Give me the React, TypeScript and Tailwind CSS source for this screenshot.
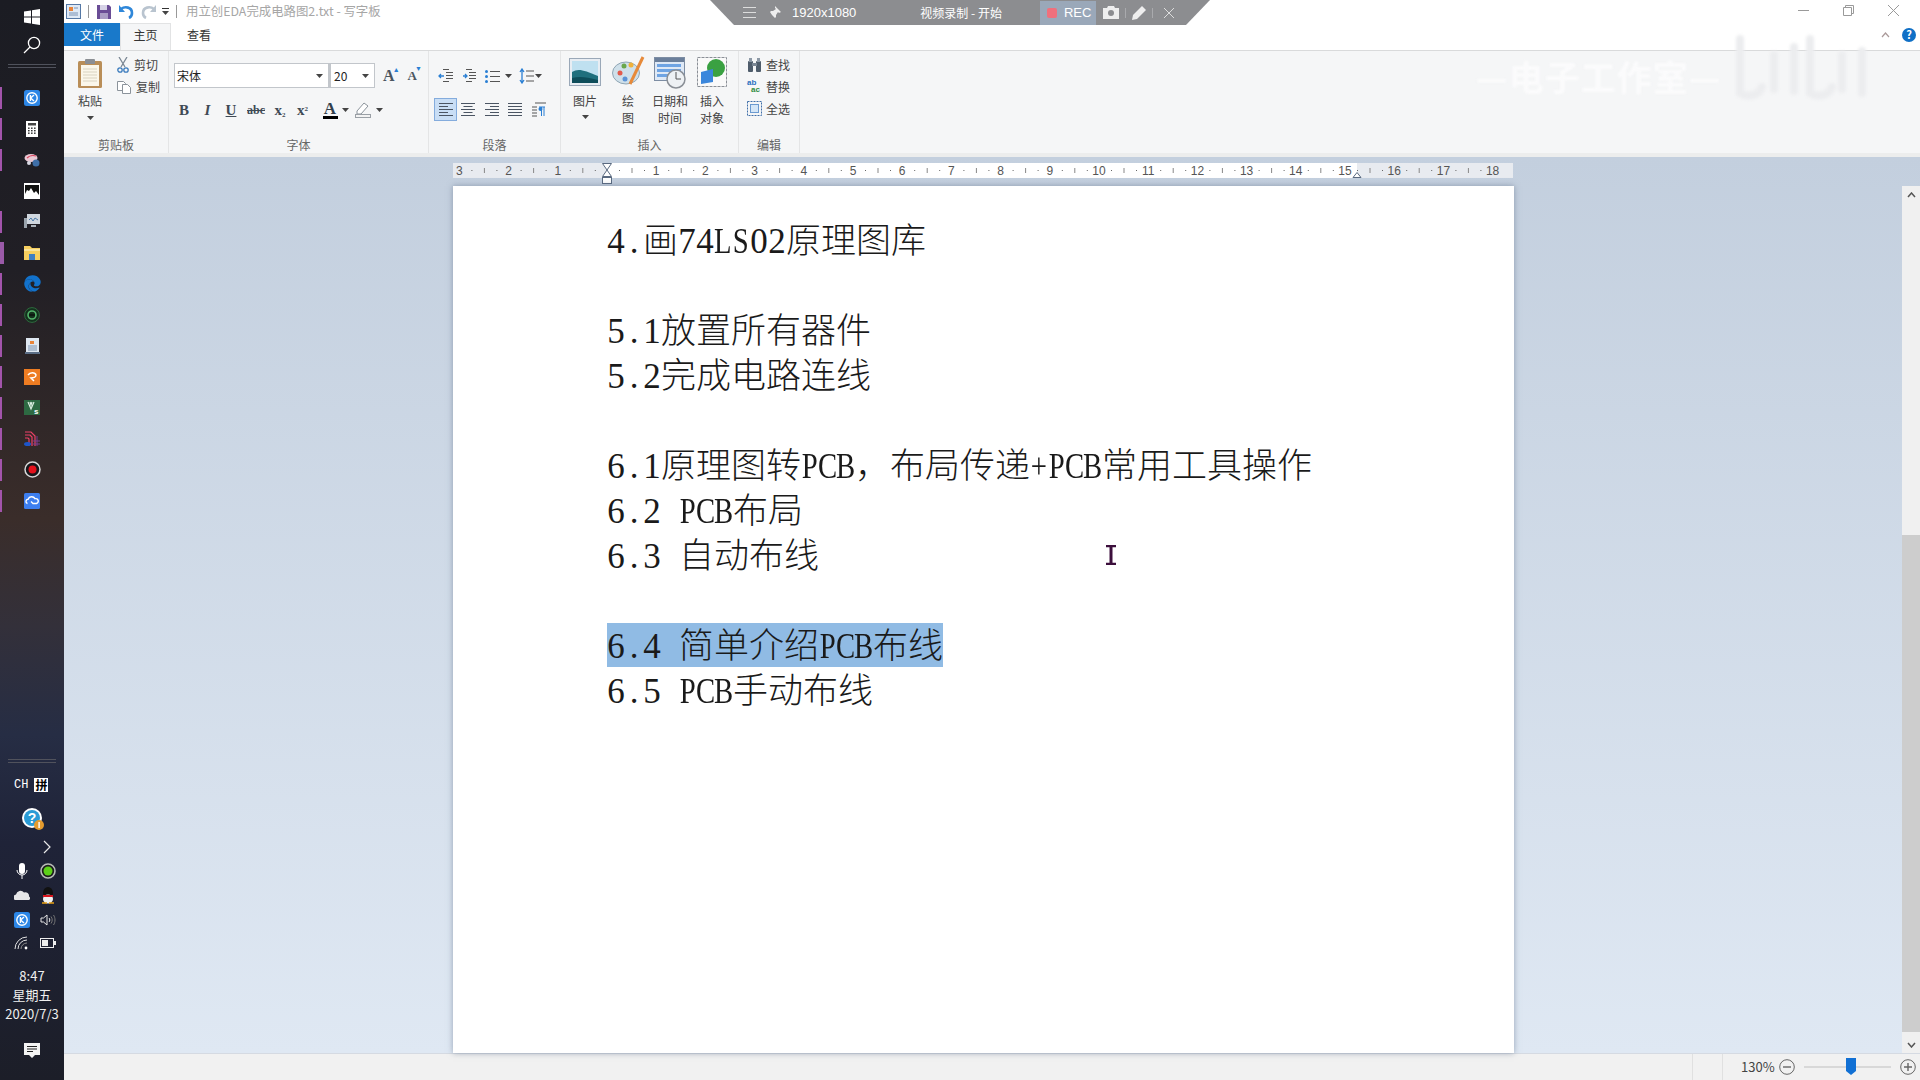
import React from 'react';
import { FaEdge } from 'react-icons/fa';

const cjk = '"Noto Sans CJK SC", "Noto Sans", sans-serif';

// SimSun stand-in: every latin char sits in a half width cell
const Half: React.FC<{ children: string }> = ({ children }) => (
  <>
    {children.split('').map((c, i) => (
      <span key={i} className="inline-flex w-[18px] justify-center font-['Liberation_Serif',serif] font-normal">
        {/[A-Z+]/.test(c) ? <span className="inline-block scale-x-[0.82]">{c}</span> : c === ' ' ? '\u00a0' : c}
      </span>
    ))}
  </>
);

const docLines: { text?: React.ReactNode; selected?: boolean }[] = [
  { text: <><Half>4.</Half>画<Half>74LS02</Half>原理图库</> },
  {},
  { text: <><Half>5.1</Half>放置所有器件</> },
  { text: <><Half>5.2</Half>完成电路连线</> },
  {},
  { text: <><Half>6.1</Half>原理图转<Half>PCB</Half>{'\uFF0C'}布局传递<Half>+PCB</Half>常用工具操作</> },
  { text: <><Half>6.2 PCB</Half>布局</> },
  { text: <><Half>6.3 </Half>自动布线</> },
  {},
  { text: <><Half>6.4 </Half>简单介绍<Half>PCB</Half>布线</>, selected: true },
  { text: <><Half>6.5 PCB</Half>手动布线</> },
];

const Strip = ({ light }: { light?: boolean }) => (
  <div className={light ? 'h-[22px] w-[4px] bg-[#9a5aa8]' : 'h-[22px] w-[2px] bg-[#a254ab]'} />
);

const Win = () => (
  <svg width="16" height="16" viewBox="0 0 16 16"><path d="M0 2.4 7 1.4V7.4H0ZM8 1.2 16 0V7.4H8ZM0 8.4H7V14.6L0 13.6ZM8 8.4H16V16L8 14.8Z" fill="#fff" /></svg>
);
const Search = () => (
  <svg width="18" height="18" viewBox="0 0 18 18" fill="none" stroke="#fff" strokeWidth="1.3"><circle cx="11" cy="7" r="5.6" /><path d="M7 11 1 17" /></svg>
);
const KIcon = ({ size = 16 }: { size?: number }) => (
  <svg width={size} height={size} viewBox="0 0 16 16"><rect width="16" height="16" rx="2.5" fill="#2c86e6" /><circle cx="8" cy="8" r="5.2" fill="none" stroke="#fff" strokeWidth="1.4" /><path d="M6.4 5v6M10 5 6.6 8l3.4 3" stroke="#fff" strokeWidth="1.4" fill="none" /></svg>
);
const Calc = () => (
  <svg width="12" height="16" viewBox="0 0 12 16"><rect width="12" height="16" fill="#fff" /><rect x="2" y="2" width="8" height="2.5" fill="#444" />{[6.5, 9, 11.5].flatMap(y => [2, 5, 8].map(x => <rect key={`${x}-${y}`} x={x} y={y} width="1.6" height="1.4" fill="#333" />))}</svg>
);
const Bird = () => (
  <svg width="17" height="16" viewBox="0 0 17 16"><ellipse cx="7" cy="6" rx="6.5" ry="4" fill="#e9c9d4" /><path d="M3 6c2-2 6-3 9-2" stroke="#d9455f" strokeWidth="1.2" fill="none" /><circle cx="12" cy="11" r="3.5" fill="#3f6fa8" /><circle cx="5" cy="11" r="2" fill="#d9d9e3" /></svg>
);
const Photo = () => (
  <svg width="16" height="16" viewBox="0 0 16 16"><rect width="16" height="16" fill="#fff" /><path d="M1 2h14v10l-3-4-2 2-3-5-2 3-2-1-2 4Z" fill="#111" /></svg>
);
const Monitor = () => (
  <svg width="16" height="15" viewBox="0 0 16 15"><rect x="3" y="0" width="13" height="10" fill="#cfd6de" /><path d="M5 6l2-2 2 3 2-3 3 2" stroke="#4a79a8" fill="none" /><rect x="0" y="4" width="3" height="10" fill="#9aa3ac" /><rect x="7" y="11" width="5" height="2" fill="#aab2ba" /></svg>
);
const Folder = () => (
  <svg width="16" height="14" viewBox="0 0 16 14"><path d="M0 0h6l2 2h8v12H0Z" fill="#f6cf5f" /><rect y="3" width="16" height="2" fill="#fbe49a" /><rect x="5" y="8" width="6" height="6" fill="#3f7fc2" /></svg>
);
const GreenRing = () => (
  <svg width="16" height="16" viewBox="0 0 16 16"><circle cx="8" cy="8" r="7.4" fill="#14301d" stroke="#2f6b3f" /><circle cx="8" cy="8" r="4" fill="none" stroke="#53b56b" strokeWidth="1.6" /><rect x="5" y="7" width="6" height="2" fill="#0c1a10" /></svg>
);
const DocIcon = () => (
  <svg width="15" height="16" viewBox="0 0 15 16"><rect x="1" y="0" width="13" height="14" fill="#dfe7f1" /><rect x="5" y="3" width="4" height="3" fill="#e8843a" /><path d="M3 8h9M3 10h9M3 12h9" stroke="#7c93b0" /><rect y="14" width="15" height="2" fill="#5b6e86" /></svg>
);
const Orange = () => (
  <svg width="16" height="16" viewBox="0 0 16 16"><rect width="16" height="16" fill="#ee7c22" /><path d="M4 6c2-3 7-3 8 0 0 2-3 3-5 3l3 3" stroke="#fff" strokeWidth="1.5" fill="none" /></svg>
);
const GreenVs = () => (
  <svg width="16" height="15" viewBox="0 0 16 15"><rect width="16" height="15" fill="#2d6a42" /><path d="M4 2l3 7 3-7M6 2l1 3 1-3" stroke="#dcefe1" strokeWidth="1.2" fill="none" /><text x="10" y="14" fontSize="8" fontWeight="700" fill="#fff" fontFamily="Liberation Sans">s</text></svg>
);
const Arcs = () => (
  <svg width="16" height="17" viewBox="0 0 16 17" fill="none"><path d="M1 2h6l4 4v10M1 5h5l2 2v9M1 8h3l1 1v7" stroke="#ec4168" strokeWidth="1.2" /><path d="M13 6v10M9 11h7M9 14h7" stroke="#7a3d8e" /><ellipse cx="3.5" cy="14" rx="3.5" ry="2" fill="#1d55c9" /></svg>
);
const RecIcon = () => (
  <svg width="17" height="17" viewBox="0 0 17 17"><circle cx="8.5" cy="8.5" r="7.5" fill="#16171c" stroke="#d8d8d8" strokeWidth="1.5" /><circle cx="8.5" cy="8.5" r="4" fill="#e3111c" /></svg>
);
const CloudBlue = () => (
  <svg width="16" height="16" viewBox="0 0 16 16"><rect width="16" height="16" rx="1.5" fill="#3d7ff0" /><path d="M3.5 10.5a2.2 2.2 0 0 1 .6-4.3A3.8 3.8 0 0 1 11 5.7a2.5 2.5 0 0 1 1.5 4.8H9L7 8.6" stroke="#fff" strokeWidth="1.4" fill="none" /></svg>
);

const railIcons: { icon: React.ReactNode; strip?: boolean; light?: boolean }[] = [
  { icon: <KIcon />, strip: true },
  { icon: <Calc />, strip: true },
  { icon: <Bird />, strip: true },
  { icon: <Photo /> },
  { icon: <Monitor />, strip: true },
  { icon: <Folder />, strip: true, light: true },
  { icon: <FaEdge className="h-[17px] w-[17px] text-[#1272cc]" />, strip: true },
  { icon: <GreenRing />, strip: true },
  { icon: <DocIcon />, strip: true },
  { icon: <Orange />, strip: true },
  { icon: <GreenVs />, strip: true },
  { icon: <Arcs />, strip: true },
  { icon: <RecIcon />, strip: true },
  { icon: <CloudBlue />, strip: true },
];

const Sidebar = () => (
  <aside className="flex h-full w-16 shrink-0 flex-col bg-[linear-gradient(180deg,#1b1c23_0%,#211f25_25%,#3a2d2a_48%,#33303a_58%,#262d44_68%,#1f2338_78%,#1c1e28_100%)] text-white">
    <div className="flex h-[30px] items-center justify-center pt-1"><Win /></div>
    <div className="flex h-[30px] items-center justify-center"><Search /></div>
    <div className="mx-2 mt-[4px] h-[4px] border-y border-[#50525c]" />
    <div className="mt-[14px] flex flex-col">
      {railIcons.map((item, i) => (
        <div key={i} className="relative flex h-[31px] items-center justify-center">
          {item.strip && <div className="absolute left-0"><Strip light={item.light} /></div>}
          {item.icon}
        </div>
      ))}
    </div>
    <div className="mx-2 mt-auto h-[4px] border-y border-[#50525c]" />
    <div className="mt-[14px] flex h-4 items-center gap-[6px] pl-[14px]">
      <span className="font-['Liberation_Mono',monospace] text-[12px] leading-none">CH</span>
      <span className="bg-white px-px text-[12px] leading-[14px] font-bold text-black" style={{ fontFamily: cjk }}>拼</span>
    </div>
    <div className="mt-[14px] flex justify-center pl-[2px]">
      <svg width="24" height="24" viewBox="0 0 24 24"><circle cx="11" cy="11" r="10" fill="#fff" /><circle cx="11" cy="11" r="8" fill="#2a9bd6" /><text x="11" y="16" textAnchor="middle" fontSize="14" fontWeight="700" fill="#fff" fontFamily="Liberation Sans">?</text><circle cx="18" cy="18" r="5" fill="#e49b2e" /><rect x="17.4" y="15" width="1.4" height="6" fill="#fff" /></svg>
    </div>
    <div className="mt-[9px] flex justify-end pr-[13px]">
      <svg width="8" height="14" viewBox="0 0 8 14" fill="none" stroke="#e8e8e8" strokeWidth="1.2"><path d="M1 1l6 6-6 6" /></svg>
    </div>
    <div className="mt-[9px] grid grid-cols-[auto_auto] justify-center gap-x-[10px] gap-y-[7.3px] pl-[6px]">
      <div className="flex h-[17px] w-4 justify-center">
        <svg width="12" height="17" viewBox="0 0 12 17"><rect x="3" y="0" width="6" height="11" rx="3" fill="#fff" /><path d="M1 7a5 5 0 0 0 10 0M6 12v4" stroke="#fff" fill="none" /></svg>
      </div>
      <svg width="16" height="16" viewBox="0 0 16 16"><circle cx="8" cy="8" r="7" fill="#1c1c1c" stroke="#b8bcb8" strokeWidth="1.6" /><circle cx="8" cy="8" r="4.5" fill="#5cd018" /></svg>
      <svg width="16" height="17" viewBox="0 0 16 17"><path d="M1 13a3 3 0 0 1 1-5.6A4.5 4.5 0 0 1 10 5.6 3.6 3.6 0 0 1 15 9.5 2 2 0 0 1 15 13Z" fill="#e6e6e8" /></svg>
      <svg width="16" height="17" viewBox="0 0 16 17"><ellipse cx="8" cy="6" rx="5" ry="6" fill="#111" /><ellipse cx="8" cy="12" rx="5" ry="4.5" fill="#f1f1f1" /><rect x="3" y="8" width="10" height="2" fill="#d8141d" /><path d="M2 16h5M9 16h5" stroke="#e8a013" strokeWidth="1.5" /></svg>
      <KIcon />
      <svg width="16" height="16" viewBox="0 0 16 16" fill="none" stroke="#e8e8e8"><path d="M1 6h2.5L7 3v10l-3.5-3H1Z" /><path d="M9 6c1 1 1 3 0 4" /><path d="M11 4.5c1.6 2 1.6 5 0 7M13.5 3c2 3 2 7 0 10" stroke="#777" /></svg>
      <svg width="16" height="16" viewBox="0 0 16 16" fill="none" stroke="#e2e2e2"><path d="M1 14A12 12 0 0 1 13 2M4 14a9 9 0 0 1 9-9" /><path d="M7 14a6 6 0 0 1 6-6" stroke="#888" /><circle cx="12" cy="13" r="1.4" fill="#fff" stroke="none" /></svg>
      <svg width="16" height="12" viewBox="0 0 16 12" className="mt-[2px]"><rect x=".5" y="1.5" width="13" height="9" fill="none" stroke="#eee" /><rect x="2" y="3" width="6" height="6" fill="#eee" /><rect x="14" y="4" width="2" height="4" fill="#eee" /></svg>
    </div>
    <div className="mt-[15px] flex flex-col items-center text-[13px] leading-[19px] text-[#f0f0f0]" style={{ fontFamily: cjk }}>
      <span>8:47</span>
      <span>星期五</span>
      <span>2020/7/3</span>
    </div>
    <div className="mt-[20px] mb-[21px] flex justify-center">
      <svg width="16" height="16" viewBox="0 0 16 16"><path d="M0 0h16v12h-5l-3 3-3-3H0Z" fill="#f4f4f4" /><path d="M3 3.5h10M3 6h10M3 8.5h6" stroke="#222" /></svg>
    </div>
  </aside>
);

const Caret = ({ className = '' }: { className?: string }) => (
  <svg width="7" height="4" viewBox="0 0 7 4" className={className}><path d="M0 0h7L3.5 4Z" fill="#444" /></svg>
);

const TitleBar = () => (
  <div className="flex h-[23px] shrink-0 items-center bg-white">
    <svg width="15" height="15" viewBox="0 0 15 15" className="ml-[2px]"><rect x=".5" y=".5" width="14" height="14" fill="#dfe9f5" stroke="#5578a5" /><rect x="3" y="3" width="4" height="4" fill="#e8843a" /><path d="M8 4h4M3 9h9M3 11h9" stroke="#7a92b3" /></svg>
    <div className="ml-[7px] h-[13px] w-px bg-[#999]" />
    <svg width="14" height="14" viewBox="0 0 14 14" className="ml-[8px]"><path d="M0 0h12l2 2v12H0Z" fill="#6a4d96" /><rect x="3" y="0" width="7" height="5" fill="#d6d2e6" /><rect x="3" y="8" width="8" height="6" fill="#a99dc5" /></svg>
    <svg width="15" height="14" viewBox="0 0 15 14" className="ml-[8px]" fill="none"><path d="M2 4c4-3 11-2 11 4 0 2-1 4-3 5" stroke="#2f87d9" strokeWidth="2.6" /><path d="M0 0v7h6Z" fill="#2f87d9" /></svg>
    <svg width="15" height="14" viewBox="0 0 15 14" className="ml-[7px]" fill="none"><path d="M13 4C9 1 2 2 2 8c0 2 1 4 3 5" stroke="#b9c4cf" strokeWidth="2.6" /><path d="M15 0v7H9Z" fill="#b9c4cf" /></svg>
    <div className="ml-[6px] flex flex-col items-center gap-[2px]">
      <div className="h-px w-[7px] bg-[#333]" />
      <Caret />
    </div>
    <div className="ml-[7px] h-[13px] w-px bg-[#999]" />
    <span className="ml-[9px] text-[12.4px] whitespace-nowrap text-[#a6a6a6]" style={{ fontFamily: cjk }}>用立创EDA完成电路图2.txt - 写字板</span>
    <div className="ml-auto flex items-center pb-[3px]">
      <div className="h-px w-[11px] bg-[#9a9a9a]" />
      <svg width="11" height="11" viewBox="0 0 11 11" fill="none" stroke="#9a9a9a" className="ml-[34px]"><path d="M.5 2.5h8v8h-8zM2.5 2.5v-2h8v8h-2" /></svg>
      <svg width="11" height="11" viewBox="0 0 11 11" fill="none" stroke="#9a9a9a" className="mr-[21px] ml-[34px]"><path d="M0 0l11 11M11 0 0 11" /></svg>
    </div>
  </div>
);

const TabRow = () => (
  <div className="flex h-[27px] shrink-0 items-start bg-white text-[12px] text-[#333]" style={{ fontFamily: cjk }}>
    <div className="flex h-[23px] w-[56px] items-center justify-center bg-[#1979ca] text-white">文件</div>
    <div className="flex h-[27px] w-[51px] items-center justify-center border-x border-t border-[#e2e3e4] bg-[#f5f6f7] pb-[4px]">主页</div>
    <div className="flex h-[23px] w-[56px] items-center justify-center">查看</div>
    <div className="ml-auto flex h-[27px] items-center gap-[12px] pr-[4px] pb-[4px]">
      <svg width="9" height="6" viewBox="0 0 9 6" fill="none" stroke="#a99" strokeWidth="1.2"><path d="M1 5l3.5-4L8 5" /></svg>
      <div className="flex h-[14px] w-[14px] items-center justify-center rounded-full bg-[#0f6fc6] text-[11px] leading-none font-bold text-white">?</div>
    </div>
  </div>
);

const Group: React.FC<{ label: string; children: React.ReactNode; widthClass: string }> = ({ label, widthClass, children }) => (
  <div className={`flex h-full shrink-0 flex-col border-r border-[#e4e5e6] ${widthClass}`}>
    <div className="relative min-h-0 flex-1">{children}</div>
    <div className="h-[16px] text-center text-[12px] leading-[16px] text-[#666]">{label}</div>
  </div>
);

const ParaLines = ({ kind }: { kind: 'l' | 'c' | 'r' | 'j' }) => {
  const rows = [0, 3, 6, 9, 12];
  const w = kind === 'j' ? [14, 14, 14, 14, 14] : [14, 9, 14, 9, 14];
  return (
    <svg width="14" height="13" viewBox="0 0 14 13">
      {rows.map((y, i) => {
        const x = kind === 'l' || kind === 'j' ? 0 : kind === 'r' ? 14 - w[i] : (14 - w[i]) / 2;
        return <rect key={y} x={x} y={y} width={w[i]} height="1" fill="#4b5563" />;
      })}
    </svg>
  );
};

const Indent = ({ right }: { right?: boolean }) => (
  <svg width="16" height="14" viewBox="0 0 16 14">
    {[0, 3, 6, 9, 12].map(y => <rect key={y} x={y === 0 || y === 12 ? 5 : 8} y={y} width={y === 0 || y === 12 ? 6 : 7} height="1" fill="#555" />)}
    <path d={right ? 'M2 7h4M4 5l2 2-2 2' : 'M1 7h5M3 5 1 7l2 2'} stroke="#2a7fd4" strokeWidth="1.3" fill="none" />
  </svg>
);

const SmallLabel: React.FC<{ children: React.ReactNode }> = ({ children }) => (
  <div className="text-center text-[12px] leading-[17px] text-[#444]">{children}</div>
);

const Ribbon = () => (
  <div className="flex h-[107px] shrink-0 border-t border-b-[4px] border-t-[#d9dadb] border-b-[#eceded] bg-[#f5f6f7]" style={{ fontFamily: cjk }}>
    {/* clipboard */}
    <Group label="剪贴板" widthClass="w-[105px]">
      <div className="flex pt-[7px] pl-[12px]">
        <div className="flex w-[28px] flex-col items-center">
          <svg width="26" height="31" viewBox="0 0 26 31"><rect x="1" y="3" width="24" height="27" rx="1.5" fill="#b98e58" /><rect x="4" y="7" width="18" height="21" fill="#fbf7ea" /><path d="M6 11h14M6 14h14M6 17h14M6 20h14M6 23h14" stroke="#d9d3c0" /><rect x="8" y="1" width="10" height="5" rx="1" fill="#8b8f94" /></svg>
          <div className="mt-[4px] text-[12px] leading-[16px] whitespace-nowrap text-[#444]">粘贴</div>
          <Caret className="mt-[7px]" />
        </div>
        <div className="mt-[-2px] ml-[13px] flex flex-col gap-[5px] text-[12px] leading-[17px] text-[#444]">
          <div className="flex items-center gap-[5px] whitespace-nowrap">
            <svg width="12" height="16" viewBox="0 0 12 16" fill="none" stroke="#3b7bbd" strokeWidth="1.3"><path d="M2 0l6 10M10 0 4 10" stroke="#7b8794" /><circle cx="3" cy="13" r="2.2" /><circle cx="9" cy="13" r="2.2" /></svg>
            剪切
          </div>
          <div className="flex items-center gap-[5px] whitespace-nowrap">
            <svg width="14" height="14" viewBox="0 0 14 14" fill="#fff" stroke="#8b939b"><path d="M.5 1.5h6l2 2v7h-8z" /><path d="M5.5 4.5h5l3 3v6h-8z" /></svg>
            复制
          </div>
        </div>
      </div>
    </Group>
    {/* font */}
    <Group label="字体" widthClass="w-[260px]">
      <div className="flex items-center pt-[12px] pl-[5px]">
        <div className="flex h-[25px] w-[155px] items-center justify-between border border-[#c2c6cb] bg-white pr-[5px] pl-[2px] text-[12px] text-[#222]">宋体<Caret /></div>
        <div className="flex h-[25px] w-[46px] items-center justify-between border border-l-[2px] border-[#c2c6cb] bg-white pr-[5px] pl-[3px] text-[12px] text-[#222]">20<Caret /></div>
        <span className="relative ml-[8px] font-['Liberation_Serif',serif] text-[16px] leading-none font-bold text-[#4a5560]">A<span className="absolute top-[-1px] right-[-5px] text-[7px] text-[#2a7fd4]">▲</span></span>
        <span className="relative ml-[13px] font-['Liberation_Serif',serif] text-[13px] leading-none font-bold text-[#4a5560]">A<span className="absolute top-[-3px] right-[-5px] text-[7px] text-[#2a7fd4]">▼</span></span>
      </div>
      <div className="mt-[10px] flex h-[24px] items-center pl-[3px] font-['Liberation_Serif',serif] text-[#3f4a55]">
        <span className="w-[24px] text-center text-[15px] font-bold">B</span>
        <span className="w-[23px] text-center text-[15px] font-bold italic">I</span>
        <span className="w-[24px] text-center text-[15px] font-bold underline">U</span>
        <span className="w-[26px] text-center text-[12px] font-bold line-through">abc</span>
        <span className="w-[22px] text-center text-[15px] font-bold">x<sub className="text-[7px]">2</sub></span>
        <span className="w-[23px] text-center text-[15px] font-bold">x<sup className="text-[7px]">2</sup></span>
        <div className="ml-[6px] flex w-[20px] flex-col items-center">
          <span className="text-[17px] leading-[13px] font-bold text-[#33404d]">A</span>
          <div className="mt-px h-[3px] w-[15px] bg-black" />
        </div>
        <Caret className="ml-[2px]" />
        <svg width="17" height="16" viewBox="0 0 17 16" fill="none" className="ml-[6px]"><path d="M9 1l4 3-7 8H2v-3Z" fill="#fff" stroke="#8b939b" /><rect x=".5" y="12.5" width="15" height="3" fill="#f3f3f3" stroke="#9aa0a6" /></svg>
        <Caret className="ml-[4px]" />
      </div>
    </Group>
    {/* paragraph */}
    <Group label="段落" widthClass="w-[132px]">
      <div className="flex h-[26px] items-center pt-[24px] pl-[9px]">
        <Indent />
        <div className="ml-[7px]"><Indent right /></div>
        <svg width="15" height="13" viewBox="0 0 15 13" className="ml-[8px]"><path d="M5 1.5h10M5 6.5h10M5 11.5h10" stroke="#555" /><circle cx="1.5" cy="1.5" r="1.5" fill="#2a7fd4" /><circle cx="1.5" cy="6.5" r="1.5" fill="#2a7fd4" /><circle cx="1.5" cy="11.5" r="1.5" fill="#2a7fd4" /></svg>
        <Caret className="ml-[5px]" />
        <svg width="15" height="16" viewBox="0 0 15 16" className="ml-[7px]"><path d="M7 3h8M7 8h8M7 13h8" stroke="#555" /><path d="M3 1v14M1 4l2-3 2 3M1 12l2 3 2-3" stroke="#2a7fd4" fill="none" strokeWidth="1.3" /></svg>
        <Caret className="ml-[1px]" />
      </div>
      <div className="mt-[21px] flex h-[23px] items-center pl-[5px]">
        <div className="flex h-[23px] w-[23px] items-center justify-center border border-[#84acdd] bg-[#c9def5]"><ParaLines kind="l" /></div>
        <div className="ml-[4px]"><ParaLines kind="c" /></div>
        <div className="ml-[10px]"><ParaLines kind="r" /></div>
        <div className="ml-[9px]"><ParaLines kind="j" /></div>
        <svg width="14" height="15" viewBox="0 0 14 15" className="ml-[10px]"><path d="M3 1h11M0 5h5M0 8h5M0 11h5M0 14h5" stroke="#555" /><path d="M7 5h6M9.5 5v9M12 5v9" stroke="#2a7fd4" /><circle cx="8.5" cy="7" r="2" fill="#2a7fd4" /></svg>
      </div>
    </Group>
    {/* insert */}
    <Group label="插入" widthClass="w-[178px]">
      <div className="flex pt-[7px] pl-[3px]">
        <div className="flex w-[42px] flex-col items-center">
          <svg width="32" height="28" viewBox="0 0 32 28"><rect x=".5" y=".5" width="31" height="27" fill="#e8edf3" stroke="#9aa8b8" /><rect x="3" y="3" width="26" height="22" fill="#bfe0f0" /><path d="M3 14c6-4 12-2 26 4v7H3Z" fill="#1f6f7d" /><path d="M3 20c8-2 14-1 26 2v3H3Z" fill="#0e4d5a" /></svg>
          <div className="mt-[6px]"><SmallLabel>图片</SmallLabel></div>
          <Caret className="mt-[6px]" />
        </div>
        <div className="ml-[1px] flex w-[42px] flex-col items-center">
          <svg width="33" height="30" viewBox="0 0 33 30" className="mt-[-2px]"><ellipse cx="14" cy="17" rx="13.5" ry="11" fill="#cfe0ea" stroke="#8fa5b4" /><circle cx="8" cy="17" r="2.5" fill="#e25a4c" /><circle cx="12" cy="10" r="2.5" fill="#69a74c" /><circle cx="19" cy="9" r="2.5" fill="#f0b13a" /><circle cx="13" cy="23" r="2.5" fill="#5b93d6" /><path d="M31 1 18 28" stroke="#e78a3a" strokeWidth="3" /></svg>
          <div className="mt-[6px]"><SmallLabel>绘<br />图</SmallLabel></div>
        </div>
        <div className="flex w-[42px] flex-col items-center">
          <svg width="33" height="32" viewBox="0 0 33 32" className="mt-[-1px]"><rect x=".5" y=".5" width="30" height="23" fill="#dfe9f6" stroke="#7d8da3" /><rect x="1" y="1" width="29" height="4" fill="#6b7f9b" /><g fill="#6fa4e3"><rect x="3" y="7" width="24" height="3" /><rect x="3" y="12" width="24" height="3" /><rect x="3" y="17" width="24" height="3" /></g><circle cx="22" cy="22" r="9" fill="#eef1f4" stroke="#8a8f96" strokeWidth="1.5" /><path d="M22 15v7h5" stroke="#555" fill="none" /></svg>
          <div className="mt-[3px] whitespace-nowrap"><SmallLabel>日期和<br />时间</SmallLabel></div>
        </div>
        <div className="flex w-[42px] flex-col items-center">
          <svg width="30" height="30" viewBox="0 0 30 30" className="mt-[-1px]"><rect x=".5" y=".5" width="29" height="29" fill="#fafafa" stroke="#8a8f96" strokeDasharray="3 1" /><circle cx="19" cy="11" r="9" fill="#3aa142" /><path d="M4 15l12-3v13L4 27Z" fill="#3b87dc" /></svg>
          <div className="mt-[5px]"><SmallLabel>插入<br />对象</SmallLabel></div>
        </div>
      </div>
    </Group>
    {/* edit */}
    <Group label="编辑" widthClass="w-[61px]">
      <div className="flex flex-col gap-[5px] pt-[5px] pl-[8px] text-[12px] leading-[17px] text-[#444]">
        <div className="flex items-center gap-[4px] whitespace-nowrap">
          <svg width="15" height="14" viewBox="0 0 15 14"><rect x="1" y="3" width="5" height="11" rx="1" fill="#4e5c6b" /><rect x="9" y="3" width="5" height="11" rx="1" fill="#4e5c6b" /><rect x="5" y="5" width="5" height="3" fill="#7a8693" /><rect x="2" y="0" width="3" height="4" fill="#8d99a6" /><rect x="10" y="0" width="3" height="4" fill="#8d99a6" /></svg>
          查找
        </div>
        <div className="flex items-center gap-[4px] whitespace-nowrap">
          <span className="flex h-[15px] w-[15px] flex-col font-['Liberation_Sans',sans-serif] text-[8px] leading-[7px] font-bold"><span className="text-[#2a6fc0]">ab</span><span className="pl-[4px] text-[#2e8b3d]">ac</span></span>
          替换
        </div>
        <div className="flex items-center gap-[4px] whitespace-nowrap">
          <svg width="15" height="15" viewBox="0 0 15 15"><rect x=".5" y=".5" width="14" height="14" fill="none" stroke="#3f6fa8" strokeDasharray="2 1" /><rect x="3.5" y="3.5" width="8" height="8" fill="#d4e6f7" stroke="#6b9ad0" /></svg>
          全选
        </div>
      </div>
    </Group>
  </div>
);

const rulerCm = Array.from({ length: 22 }, (_, i) => i - 3);

const Ruler = () => (
  <svg width="1060" height="24" viewBox="0 0 1060 24" className="block overflow-visible">
    <rect width="1060" height="15" fill="#fff" />
    <rect width="154" height="15" fill="#e8ebf0" />
    <rect x="904" width="156" height="15" fill="#e8ebf0" />
    {rulerCm.map(n => {
      const x = 154 + n * 49.2;
      return (
        <g key={n}>
          {n !== 0 && <text x={x} y="11.5" textAnchor="middle" fontSize="12" fill="#555" fontFamily="Liberation Sans">{Math.abs(n)}</text>}
          {x + 49 < 1060 && (
            <>
              <rect x={x + 12} y="7" width="1" height="1" fill="#666" />
              <rect x={x + 24.5} y="5" width="1" height="5" fill="#888" />
              <rect x={x + 37} y="7" width="1" height="1" fill="#666" />
            </>
          )}
        </g>
      );
    })}
    <path d="M149.5.5h9l-4.5 6.5 4.5 6.5h-9l4.5-6.5Z" fill="#fff" stroke="#5a6a80" />
    <rect x="149.5" y="14.5" width="9" height="6" fill="#fff" stroke="#5a6a80" />
    <path d="M900 14.5l4-5 4 5Z" fill="#fff" stroke="#5a6a80" />
  </svg>
);

const Workspace = () => (
  <div className="flex min-h-0 flex-1 bg-[linear-gradient(180deg,#c3cfde_0%,#dfe8f3_100%)]">
    <div className="flex min-w-0 flex-1 flex-col pl-[389px]">
      <div className="pt-[6px]"><Ruler /></div>
      <div className="relative mt-[-1px] min-h-0 w-[1061px] flex-1 bg-white pt-[32px] pl-[154px] text-[35px] text-[#1a1a1a] shadow-[0_0_6px_rgba(90,105,130,0.55)]" style={{ fontFamily: cjk }}>
        {docLines.map((line, i) => (
          <div key={i} className="h-[45px] whitespace-nowrap font-light">
            <div className={line.selected ? 'h-[44px] w-fit bg-[#90bbe4] leading-[40px]' : 'leading-[40px]'}>{line.text}</div>
          </div>
        ))}
        <svg width="14" height="20" viewBox="0 0 14 20" className="absolute top-[359px] left-[651px]"><path d="M2 1h10M2 19h10" stroke="#3c0f3c" strokeWidth="2.5" /><path d="M7 1v18" stroke="#3c0f3c" strokeWidth="3" /></svg>
      </div>
    </div>
    <div className="mt-[29px] flex w-[18px] shrink-0 flex-col bg-[#f0f0f0]">
      <div className="flex h-[17px] items-center justify-center">
        <svg width="9" height="6" viewBox="0 0 9 6" fill="none" stroke="#555" strokeWidth="1.5"><path d="M1 5l3.5-4L8 5" /></svg>
      </div>
      <div className="mt-[332px] h-[497px] bg-[#cdcdcd]" />
      <div className="mt-auto flex h-[17px] items-center justify-center">
        <svg width="9" height="6" viewBox="0 0 9 6" fill="none" stroke="#555" strokeWidth="1.5"><path d="M1 1l3.5 4L8 1" /></svg>
      </div>
    </div>
  </div>
);

const StatusBar = () => (
  <div className="flex h-[27px] shrink-0 items-center justify-end border-t border-[#d5dae2] bg-[#f1f1f1] text-[13px] text-[#444]" style={{ fontFamily: cjk }}>
    <div className="h-full w-[31px] border-x border-[#e0e0e0]" />
    <span className="ml-[18px] w-[32px] text-right whitespace-nowrap">130%</span>
    <svg width="16" height="16" viewBox="0 0 16 16" fill="none" stroke="#666" className="ml-[6px]"><circle cx="8" cy="8" r="7.3" /><path d="M4 8h8" strokeWidth="1.4" /></svg>
    <div className="relative mx-[9px] h-[2px] w-[87px] bg-[#d8d8d8]">
      <svg width="10" height="17" viewBox="0 0 10 17" className="absolute top-[-8px] left-[42px]"><path d="M0 0h10v13l-5 4-5-4Z" fill="#1170d4" /></svg>
    </div>
    <svg width="16" height="16" viewBox="0 0 16 16" fill="none" stroke="#666" className="mr-[4px]"><circle cx="8" cy="8" r="7.3" /><path d="M4 8h8M8 4v8" strokeWidth="1.4" /></svg>
  </div>
);

// screen recorder toolbar floating over the title bar
const RecorderBar = () => (
  <div className="absolute top-0 left-[710px] flex h-[25px] w-[500px] items-center bg-[#8c8d90] text-[12px] text-white [clip-path:polygon(0_0,100%_0,476px_100%,24px_100%)]" style={{ fontFamily: cjk }}>
    <svg width="13" height="11" viewBox="0 0 13 11" stroke="#ddd" className="ml-[33px]"><path d="M0 .5h13M0 5.5h13M0 10.5h13" /></svg>
    <svg width="13" height="13" viewBox="0 0 13 13" className="ml-[12px]" fill="#eee"><path d="M7 0l6 6-2 1-1-1-2 3 0 2-1 1-3-3-3 4 3-4-2-3 1-1 2 0 3-2-1-1Z" /></svg>
    <span className="ml-[11px] font-['Liberation_Sans',sans-serif] text-[13px] whitespace-nowrap">1920x1080</span>
    <span className="ml-[64px] whitespace-nowrap">视频录制 - 开始</span>
    <div className="ml-[38px] flex h-[24px] w-[56px] items-center bg-[#9aa8b9]">
      <div className="ml-[7px] h-[10px] w-[10px] rounded-[2px] bg-[#f0707c]" />
      <span className="ml-[7px] font-['Liberation_Sans',sans-serif] text-[13px]">REC</span>
    </div>
    <svg width="16" height="13" viewBox="0 0 16 13" className="ml-[7px]"><path d="M0 2h4l1-2h6l1 2h4v11H0Z" fill="#eee" /><circle cx="8" cy="7" r="3" fill="#8c8d90" /></svg>
    <div className="ml-[6px] h-[10px] w-px bg-[#a9aaad]" />
    <svg width="14" height="14" viewBox="0 0 14 14" className="ml-[6px]"><path d="M10 0l4 4-9 9-5 1 1-5Z" fill="#eee" /></svg>
    <div className="ml-[6px] h-[10px] w-px bg-[#a9aaad]" />
    <svg width="10" height="10" viewBox="0 0 10 10" stroke="#ddd" className="ml-[11px]"><path d="M0 0l10 10M10 0 0 10" /></svg>
  </div>
);

// faint video watermark burnt over the ribbon
const Watermark = () => (
  <div className="absolute top-[35px] left-[1476px] flex items-start">
    <span className="mt-[20px] text-[35px] leading-[42px] font-bold tracking-[1px] whitespace-nowrap text-[#fbfbfc] blur-[1px]" style={{ fontFamily: cjk }}>—电子工作室—</span>
    <svg width="142" height="66" viewBox="0 0 142 66" fill="none" stroke="#ecedef" strokeWidth="8" strokeLinecap="round" className="ml-[12px] blur-[1.5px]">
      <path d="M6 4v54c6 4 18 4 22-6M40 20v34M60 12v44M76 4v54c6 4 18 4 22-6M108 20v34M128 16v42" />
    </svg>
  </div>
);

const App: React.FC = () => (
  <div className="relative flex h-[1080px] w-[1920px] overflow-hidden bg-white">
    <Sidebar />
    <main className="flex min-w-0 flex-1 flex-col">
      <TitleBar />
      <TabRow />
      <Ribbon />
      <Workspace />
      <StatusBar />
    </main>
    <RecorderBar />
    <Watermark />
  </div>
);

export default App;
